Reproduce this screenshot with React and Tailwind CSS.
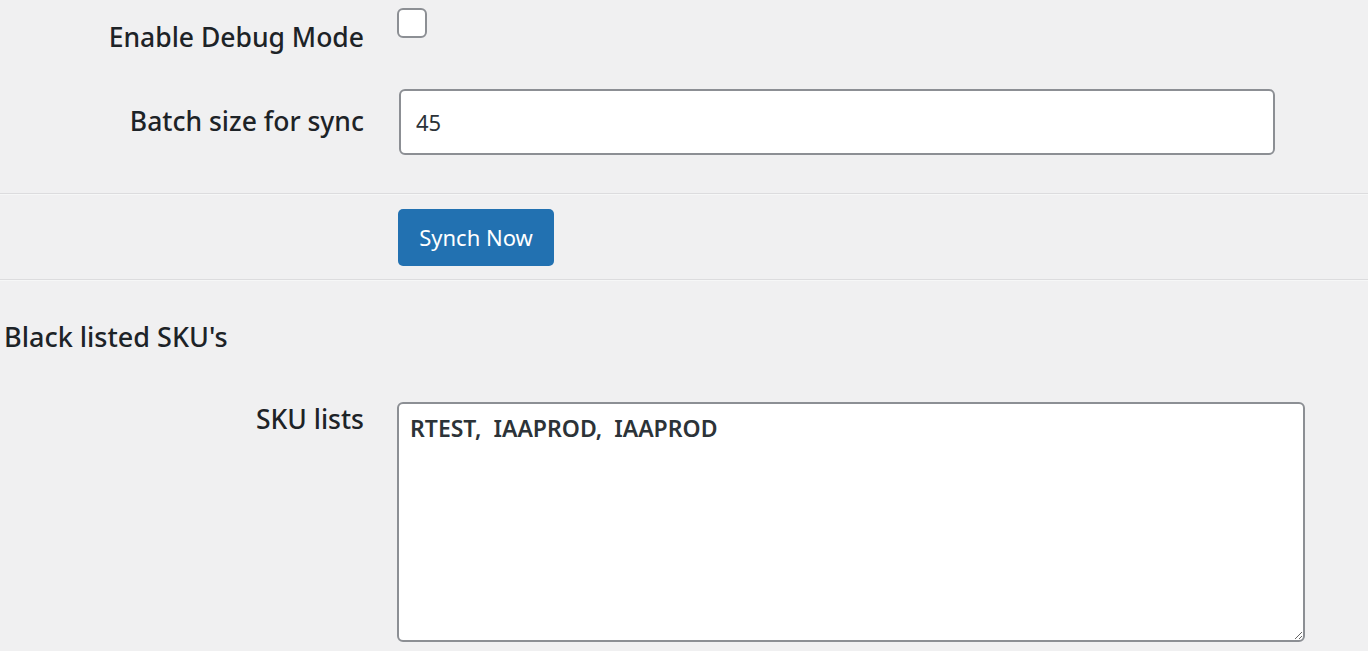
import React, { useState } from 'react';

export default function App() {
  const [debug, setDebug] = useState(false);
  const [batch, setBatch] = useState('45');
  const [skus, setSkus] = useState('RTEST,  IAAPROD,  IAAPROD');

  return (
    <div
      className="w-full h-[651px] overflow-hidden bg-[#f0f0f1] text-[#1d2327]"
      style={{ fontFamily: '"Noto Sans", "Open Sans", sans-serif' }}
    >
      {/* Debug row */}
      <div className="flex items-start">
        <label className="w-[364px] text-right text-[26.5px] font-medium leading-[32px] mt-[21px]">
          Enable Debug Mode
        </label>
        <input
          type="checkbox"
          checked={debug}
          onChange={(e) => setDebug(e.target.checked)}
          className="appearance-none ml-[33px] mt-[8px] w-[30px] h-[30px] rounded-[6px] border-2 border-[#8c8f94] bg-white"
        />
      </div>

      {/* Batch size row */}
      <div className="flex items-center mt-[36px]">
        <label className="w-[364px] text-right text-[26.5px] font-medium leading-[32px] -mt-[2px]">
          Batch size for sync
        </label>
        <input
          type="text"
          value={batch}
          onChange={(e) => setBatch(e.target.value)}
          className="ml-[35px] w-[876px] h-[66px] rounded-[6px] border-2 border-[#8c8f94] bg-white px-[15px] text-[22px] text-[#2c3338] outline-none"
        />
      </div>

      <hr className="mt-[38px] border-0 border-t border-b border-t-[#dcdcde] border-b-[#f6f7f7]" />

      {/* Sync button */}
      <div className="flex mt-[14px]">
        <button className="ml-[398px] w-[156px] h-[57px] rounded-[5px] bg-[#2271b1] text-white text-[22px]">
          Synch Now
        </button>
      </div>

      <hr className="mt-[13px] border-0 border-t border-b border-t-[#dcdcde] border-b-[#f6f7f7]" />

      <h2 className="ml-[4px] mt-[38px] text-[27px] font-medium leading-[36px]">Black listed SKU's</h2>

      {/* SKU list row */}
      <div className="flex items-start mt-[46px]">
        <label className="w-[364px] text-right text-[26.5px] font-medium leading-[32px] mt-[2px]">
          SKU lists
        </label>
        <textarea
          value={skus}
          onChange={(e) => setSkus(e.target.value)}
          className="ml-[33px] mt-[1px] w-[908px] h-[240px] rounded-[6px] border-2 border-[#8c8f94] bg-white px-[11px] py-[8px] text-[23px] font-semibold leading-[32px] text-[#2c3338] outline-none resize-y"
        />
      </div>
    </div>
  );
}
